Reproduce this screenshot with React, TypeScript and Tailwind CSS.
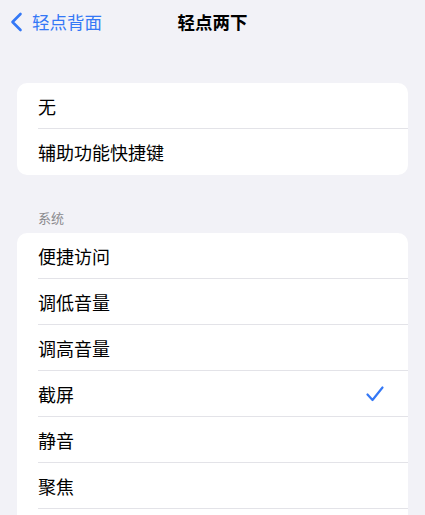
import React from "react";

const font = { fontFamily: '"Noto Sans CJK SC", "Noto Sans", sans-serif' };

function Row({ label, checked, last }: { label: string; checked?: boolean; last?: boolean }) {
  return (
    <div className="flex h-[46px] items-stretch pl-[21px]">
      <div className={`flex flex-1 items-center justify-between pr-[24px] ${last ? "" : "border-b border-[#e3e3e8]"}`}>
        <span className="text-[18px] text-black leading-none">{label}</span>
        {checked && (
          <svg width="18" height="16" viewBox="0 0 18 16" fill="none">
            <path d="M1.5 8.5 L6.5 14 L16.5 1.5" stroke="#3478f6" strokeWidth="2.2" strokeLinecap="round" strokeLinejoin="round" />
          </svg>
        )}
      </div>
    </div>
  );
}

export default function App() {
  return (
    <div className="w-[425px] h-[515px] overflow-hidden bg-[#f2f2f7]" style={font}>
      <div className="relative flex h-[44px] items-center">
        <div className="flex items-center pl-[10px] text-[#3478f6]">
          <svg width="13" height="20" viewBox="0 0 13 20" fill="none">
            <path d="M10.5 2 L2.5 10 L10.5 18" stroke="#3478f6" strokeWidth="2.6" strokeLinecap="round" strokeLinejoin="round" />
          </svg>
          <span className="ml-[9px] text-[17.5px] leading-none">轻点背面</span>
        </div>
        <div className="absolute inset-x-0 top-0 flex h-[44px] items-center justify-center pointer-events-none">
          <span className="text-[17.5px] font-semibold text-black leading-none">轻点两下</span>
        </div>
      </div>
      <div className="px-[17px] pt-[39px]">
        <div className="overflow-hidden rounded-[10px] bg-white">
          <Row label="无" />
          <Row label="辅助功能快捷键" last />
        </div>
        <div className="pl-[21px] pt-[36px] pb-[9px] text-[13px] leading-none text-[#8a8a8e]">系统</div>
        <div className="overflow-hidden rounded-[10px] bg-white">
          <Row label="便捷访问" />
          <Row label="调低音量" />
          <Row label="调高音量" />
          <Row label="截屏" checked />
          <Row label="静音" />
          <Row label="聚焦" />
          <Row label="" />
        </div>
      </div>
    </div>
  );
}
